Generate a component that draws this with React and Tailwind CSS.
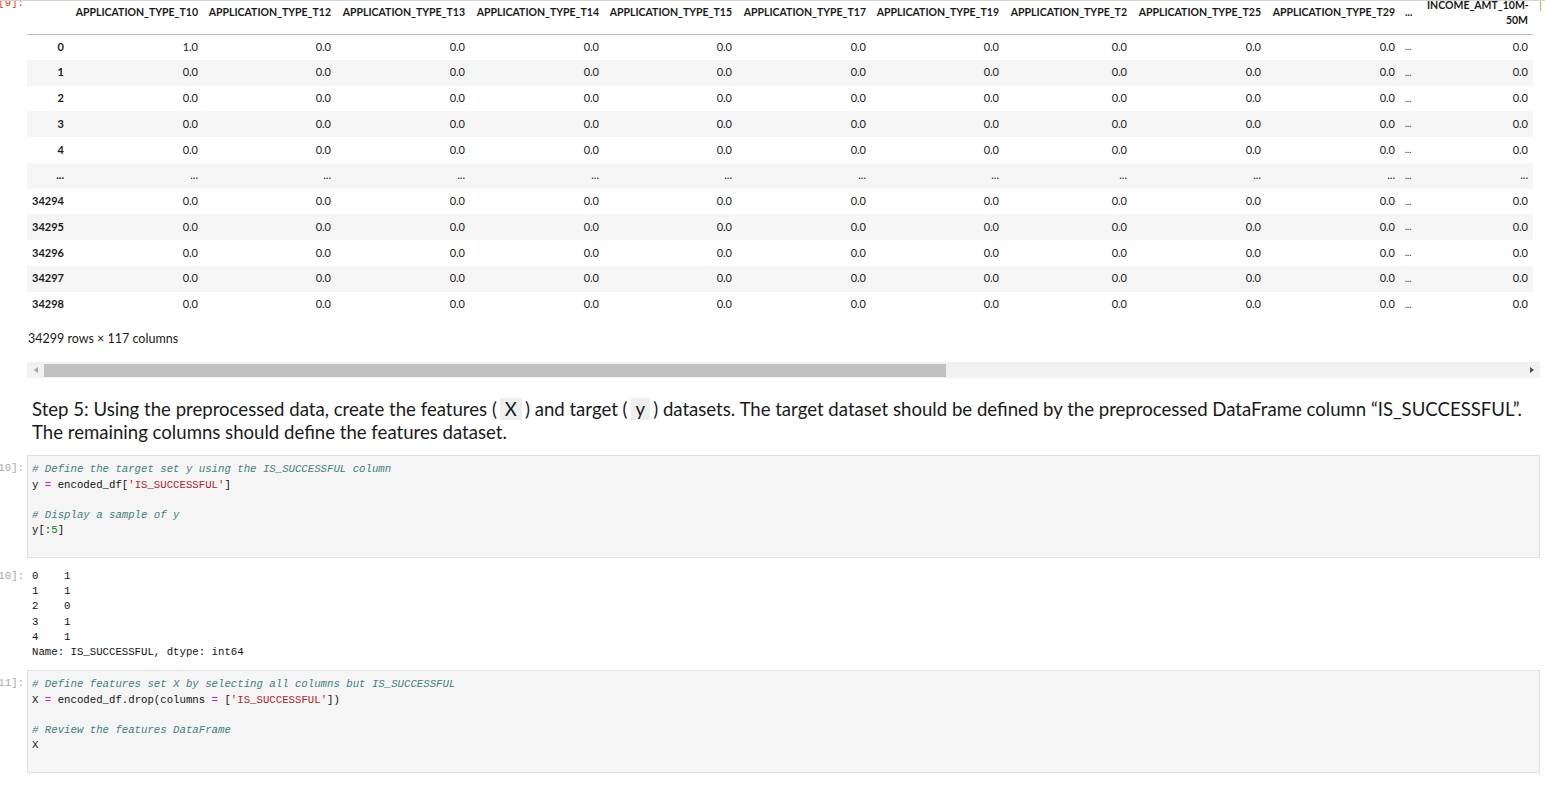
import React from 'react';

// Jupyter notebook fragment: dataframe output, markdown step, two code cells.

const UI = { fontFamily: 'Lato, "Open Sans", sans-serif' };
const MONO = { fontFamily: '"Liberation Mono", "DejaVu Sans Mono", monospace' };

const COLS = [
  { name: 'APPLICATION_TYPE_T10', w: 'w-[134px]' },
  { name: 'APPLICATION_TYPE_T12', w: 'w-[133px]' },
  { name: 'APPLICATION_TYPE_T13', w: 'w-[134px]' },
  { name: 'APPLICATION_TYPE_T14', w: 'w-[134px]' },
  { name: 'APPLICATION_TYPE_T15', w: 'w-[133px]' },
  { name: 'APPLICATION_TYPE_T17', w: 'w-[134px]' },
  { name: 'APPLICATION_TYPE_T19', w: 'w-[133px]' },
  { name: 'APPLICATION_TYPE_T2', w: 'w-[128px]' },
  { name: 'APPLICATION_TYPE_T25', w: 'w-[134px]' },
  { name: 'APPLICATION_TYPE_T29', w: 'w-[134px]' },
  { name: '...', w: 'w-[22px]', gap: true },
  { name: 'INCOME_AMT_10M-50M', w: 'w-[111px]' },
];

const ROWS = ['0', '1', '2', '3', '4', '...', '34294', '34295', '34296', '34297', '34298'];

function Prompt({ label, color = 'text-[#a8a8a8]', className = '' }) {
  return (
    <div className={`w-[27px] shrink-0 flex justify-end pr-[3px] whitespace-nowrap text-[10.7px] leading-[15.25px] ${color} ${className}`} style={MONO}>
      {label}
    </div>
  );
}

function DataFrame() {
  return (
    <div className="w-[1513px] overflow-hidden">
      <table className="table-fixed border-collapse w-[1506px] text-[11px] text-[#1a1a1a]" style={UI}>
        <colgroup>
          <col className="w-[42px]" />
          {COLS.map((c) => (
            <col key={c.name + c.w} className={c.w} />
          ))}
        </colgroup>
        <thead>
          <tr className="h-[42px] border-b border-[#bdbdbd]">
            <th />
            {COLS.map((c, i) => (
              <th
                key={i}
                className={`px-[5px] align-middle font-bold text-[10.5px] leading-[15px] ${c.gap ? 'text-left' : 'text-right'}`}
              >
                {c.name}
              </th>
            ))}
          </tr>
        </thead>
        <tbody>
          {ROWS.map((r, ri) => (
            <tr key={r} className={`h-[25.75px] ${ri % 2 === 1 ? 'bg-[#f5f5f5]' : 'bg-white'}`}>
              <th className="px-[5px] text-right font-bold">{r}</th>
              {COLS.map((c, ci) => {
                let v = r === '...' ? '...' : '0.0';
                if (ri === 0 && ci === 0) v = '1.0';
                if (c.gap) v = '...';
                return (
                  <td key={ci} className={`px-[5px] ${c.gap ? 'text-left text-[9px]' : 'text-right'}`}>
                    {v}
                  </td>
                );
              })}
            </tr>
          ))}
        </tbody>
      </table>
      <p className="mt-[13px] pl-[1px] text-[12.5px] leading-[18px] text-[#1a1a1a]" style={UI}>
        34299 rows × 117 columns
      </p>
      <div className="mt-[14px] h-[16px] bg-[#f1f1f1] flex items-center">
        <div className="w-[17px] h-full flex items-center justify-center">
          <span className="w-0 h-0 border-y-[3.5px] border-y-transparent border-r-[4px] border-r-[#a3a3a3]" />
        </div>
        <div className="w-[902px] h-[13px] bg-[#c1c1c1]" />
        <div className="flex-1" />
        <div className="w-[17px] h-full flex items-center justify-center">
          <span className="w-0 h-0 border-y-[3.5px] border-y-transparent border-l-[4px] border-l-[#505050]" />
        </div>
      </div>
    </div>
  );
}

const C = ({ children }) => <span className="italic text-[#408080]">{children}</span>;
const Op = ({ children }) => <span className="text-[#aa22ff]">{children}</span>;
const S = ({ children }) => <span className="text-[#ba2121]">{children}</span>;
const N = ({ children }) => <span className="text-[#008000]">{children}</span>;

function CodeCell({ label, lines }) {
  return (
    <div className="flex">
      <Prompt label={label} className="pt-[6px]" />
      <div
        className="w-[1513px] border border-[#e0e0e0] bg-[#f5f5f5] px-[4px] pt-[6px] pb-[3px] text-[10.7px] leading-[15.25px] text-[#111] whitespace-pre"
        style={MONO}
      >
        {lines.map((l, i) => (
          <div key={i} className="h-[15.25px]">{l}</div>
        ))}
      </div>
    </div>
  );
}

function InlineCode({ children }) {
  return <span className="mx-[3px] px-[5px] bg-[#eeeeee]">{children}</span>;
}

export default function App() {
  return (
    <div className="w-[1545px] h-[785px] overflow-hidden bg-white border-t border-[#d4d4d4] relative">
      <div className="absolute left-[1540px] top-0 w-[1px] h-[10px] bg-[#f0a050]" />
      <div className="-mt-[9px]">
        {/* Out[9]: dataframe */}
        <div className="flex">
          <Prompt label="[9]:" color="text-[#d84315]" className="pt-[4px]" />
          <DataFrame />
        </div>

        {/* markdown */}
        <div className="flex mt-[20px]">
          <div className="w-[27px] shrink-0" />
          <div className="pl-[5px] text-[18.6px] leading-[23px] text-[#1a1a1a] whitespace-nowrap" style={UI}>
            Step 5: Using the preprocessed data, create the features (<InlineCode>X</InlineCode>) and target (
            <InlineCode>y</InlineCode>) datasets. The target dataset should be defined by the preprocessed DataFrame column
            “IS_SUCCESSFUL”.
            <br />
            The remaining columns should define the features dataset.
          </div>
        </div>

        <div className="mt-[11px]">
          <CodeCell
            label="[10]:"
            lines={[
              <C># Define the target set y using the IS_SUCCESSFUL column</C>,
              <>y <Op>=</Op> encoded_df[<S>'IS_SUCCESSFUL'</S>]</>,
              '',
              <C># Display a sample of y</C>,
              <>y[:<N>5</N>]</>,
              '',
            ]}
          />
        </div>

        {/* Out[10] */}
        <div className="flex mt-[11px]">
          <Prompt label="[10]:" />
          <div className="pl-[5px] text-[10.7px] leading-[15.25px] text-[#111] whitespace-pre" style={MONO}>
            {['0    1', '1    1', '2    0', '3    1', '4    1', 'Name: IS_SUCCESSFUL, dtype: int64'].map((l) => (
              <div key={l}>{l}</div>
            ))}
          </div>
        </div>

        <div className="mt-[10px]">
          <CodeCell
            label="[11]:"
            lines={[
              <C># Define features set X by selecting all columns but IS_SUCCESSFUL</C>,
              <>X <Op>=</Op> encoded_df.drop(columns <Op>=</Op> [<S>'IS_SUCCESSFUL'</S>])</>,
              '',
              <C># Review the features DataFrame</C>,
              'X',
              '',
            ]}
          />
        </div>
      </div>
    </div>
  );
}
